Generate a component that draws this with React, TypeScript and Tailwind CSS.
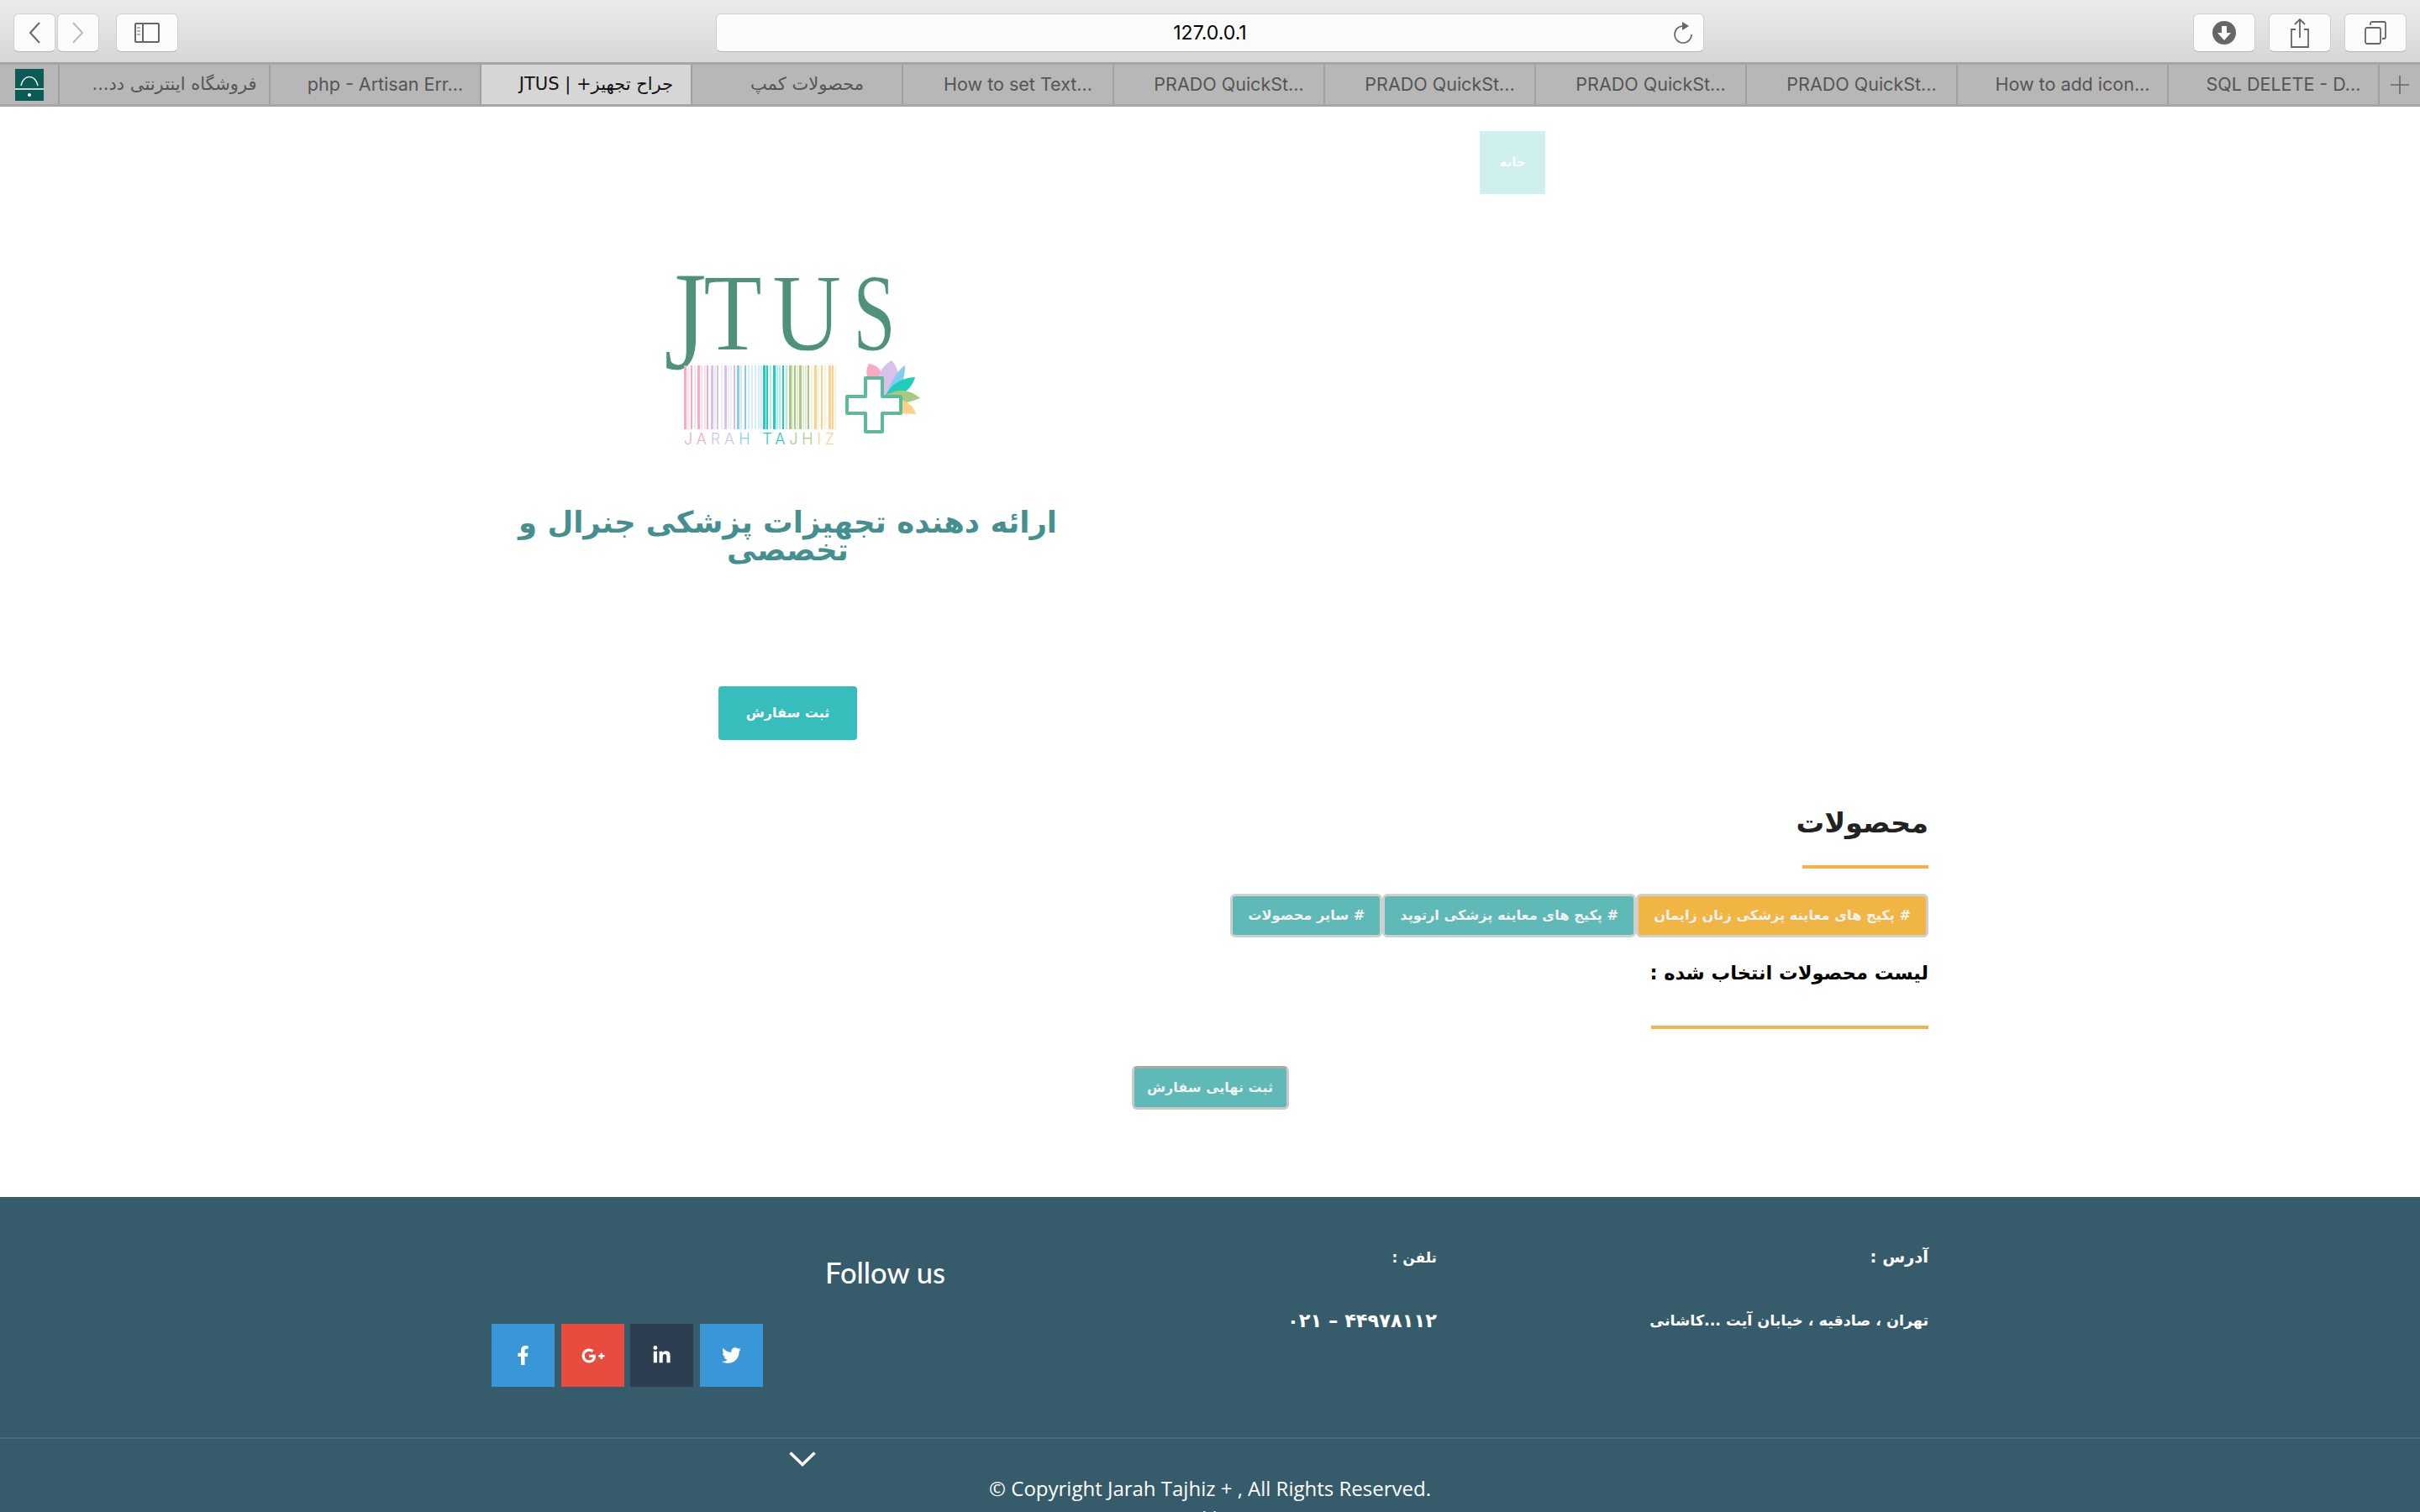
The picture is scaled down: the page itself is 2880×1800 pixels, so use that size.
import { FaFacebookF, FaGooglePlusG, FaLinkedinIn, FaTwitter } from "react-icons/fa";

const fa = "font-['DejaVu_Sans',sans-serif]";

const tabs = [
  { label: "فروشگاه اینترنتی دد...", rtl: true },
  { label: "php - Artisan Err..." },
  { label: "جراح تجهیز+ | JTUS", rtl: true, active: true },
  { label: "محصولات کمپ", rtl: true },
  { label: "How to set Text..." },
  { label: "PRADO QuickSt..." },
  { label: "PRADO QuickSt..." },
  { label: "PRADO QuickSt..." },
  { label: "PRADO QuickSt..." },
  { label: "How to add icon..." },
  { label: "SQL DELETE - D..." },
];

const barSets = [
  { color: "#f7aac0", x: [74, 82, 90, 101], pale: [78, 86, 94, 98] },
  { color: "#d8c2ea", x: [106, 113, 122, 133], pale: [110, 118, 126, 129] },
  { color: "#86ccf1", x: [137, 146], pale: [141, 150, 154, 158, 162, 165] },
  { color: "#1fcdbb", x: [168, 172, 180, 191], pale: [176, 184, 187, 195] },
  { color: "#a7ca80", x: [199, 205, 211, 221], pale: [202, 208, 215, 218] },
  { color: "#fdd18c", x: [229, 237, 246, 250], pale: [225, 233, 241, 253] },
];

function ToolButton({ className, children }: { className: string; children: React.ReactNode }) {
  return (
    <div className={`h-[46px] rounded-[6px] bg-[#fbfbfb] border border-[#cfcfcf] border-b-[#b5b5b5] flex items-center justify-center ${className}`}>
      {children}
    </div>
  );
}

function BrowserChrome() {
  return (
    <div>
      <div className="h-[74px] bg-gradient-to-b from-[#ececec] to-[#d6d6d6] flex items-start pt-4 pl-4 pr-4">
        <ToolButton className="w-[50px]">
          <svg width="16" height="26" viewBox="0 0 16 26" fill="none" stroke="#666" strokeWidth="2"><path d="M14 1 3 13l11 12" /></svg>
        </ToolButton>
        <ToolButton className="w-[50px] ml-[2px]">
          <svg width="16" height="26" viewBox="0 0 16 26" fill="none" stroke="#bbb" strokeWidth="2"><path d="m2 1 11 12L2 25" /></svg>
        </ToolButton>
        <ToolButton className="w-[74px] ml-[20px]">
          <svg width="30" height="24" viewBox="0 0 30 24" fill="none" stroke="#666" strokeWidth="2">
            <rect x="1" y="1" width="28" height="22" rx="1" />
            <path d="M10 1v22" />
            <path d="M3 6h4M3 10h4M3 14h4" strokeWidth="1.5" stroke="#999" />
          </svg>
        </ToolButton>
        <ToolButton className="w-[1176px] ml-[640px] relative">
          <span className="font-['Inter',sans-serif] text-[23px] text-black">127.0.0.1</span>
          <svg className="absolute right-[11px] top-[8px]" width="26" height="28" viewBox="0 0 26 28" fill="none" stroke="#666" strokeWidth="1.6">
            <path d="M13 6a10 10 0 1 0 10 10" />
            <path d="M12 1l8 5-8 5z" fill="#666" stroke="none" />
          </svg>
        </ToolButton>
        <ToolButton className="w-[74px] ml-[582px]">
          <svg width="28" height="28" viewBox="0 0 28 28">
            <circle cx="14" cy="14" r="14" fill="#666" />
            <path d="M11 6h6v8h5l-8 9-8-9h5z" fill="#fff" />
          </svg>
        </ToolButton>
        <ToolButton className="w-[74px] ml-4">
          <svg width="24" height="36" viewBox="0 0 24 36" fill="none" stroke="#666" strokeWidth="1.8">
            <path d="M7 14H2v21h20V14h-5" />
            <path d="M12 24V2M6 8l6-6 6 6" />
          </svg>
        </ToolButton>
        <ToolButton className="w-[74px] ml-4">
          <svg width="26" height="28" viewBox="0 0 26 28" fill="none" stroke="#666" strokeWidth="1.8">
            <rect x="1" y="8" width="18" height="19" rx="2" />
            <path d="M7 5V3a2 2 0 0 1 2-2h14a2 2 0 0 1 2 2v16a2 2 0 0 1-2 2h-2" />
          </svg>
        </ToolButton>
      </div>
      <div className="h-[53px] bg-[#b7b7b7] border-y-[3px] border-[#a6a6a6] flex font-['Inter',sans-serif] text-[21.5px] text-[#555]">
        <div className="w-[71px] shrink-0 flex items-center justify-center border-r-2 border-[#a0a0a0]">
          <svg width="34" height="38" viewBox="0 0 34 38">
            <rect width="34" height="38" fill="#0b5a54" />
            <path d="M7 20C10 6 24 6 27 20" fill="none" stroke="#fff" strokeWidth="1.5" />
            <path d="M0 24h34" stroke="#fff" strokeWidth="1.5" />
            <circle cx="17" cy="31" r="2" fill="#fff" />
          </svg>
        </div>
        {tabs.map((tab, i) => (
          <div
            key={i}
            dir={tab.rtl ? "rtl" : "ltr"}
            className={`w-[251px] shrink-0 flex items-center justify-center pl-[24px] whitespace-nowrap border-r-2 border-[#a0a0a0] ${tab.rtl ? fa + " text-[21px]" : ""} ${tab.active ? "bg-[#d6d6d6] text-[#111]" : ""}`}
          >
            {tab.label}
          </div>
        ))}
        <div className="flex-1 flex items-center justify-center">
          <svg width="22" height="22" viewBox="0 0 22 22" stroke="#666" strokeWidth="1.6"><path d="M11 0v22M0 11h22" /></svg>
        </div>
      </div>
    </div>
  );
}

function Logo() {
  return (
    <svg width="400" height="260" viewBox="0 0 400 260" className="block">
      <g fontFamily="'Liberation Serif', serif" fill="#4f917b" fontSize="131" stroke="#fff" strokeWidth="0.8">
        <text transform="translate(50 139) scale(1 1.3)">J</text>
        <text transform="translate(97 117) scale(0.875 1)">T</text>
        <text transform="translate(179 117) scale(0.87 1)">U</text>
        <text transform="translate(275 117) scale(0.7 1)">S</text>
      </g>
      {barSets.map((set) => (
        <g key={set.color}>
          {set.pale.map((x) => (
            <rect key={x} x={x} y="135" width="2" height="76" fill={set.color} opacity="0.35" />
          ))}
          {set.x.map((x, i) => (
            <rect key={x} x={x} y="135" width={i % 2 ? 2 : 3} height="76" fill={set.color} />
          ))}
        </g>
      ))}
      <text x="74" y="229" fontFamily="'Inter', sans-serif" fontSize="18" fontWeight="300" letterSpacing="4.9">
        <tspan fill="#f7aac0">JA</tspan>
        <tspan fill="#d8c2ea">RA</tspan>
        <tspan fill="#86ccf1">H </tspan>
        <tspan fill="#1fcdbb">TA</tspan>
        <tspan fill="#a7ca80">JH</tspan>
        <tspan fill="#fdd18c">IZ</tspan>
      </text>
      <g>
        <path d="M312 180C287 150 290 142 294 133C305 135 315 140 312 180Z" fill="#f7aac0" />
        <path d="M312 180C300 150 305 140 321 129C335 145 330 160 312 180Z" fill="#d8c2ea" />
        <path d="M312 180C320 150 330 140 337 135C337 155 330 170 312 180Z" fill="#86ccf1" />
        <path d="M312 175C320 155 335 150 349 149C345 165 330 172 312 180Z" fill="#1fcdbb" />
        <path d="M312 172C330 160 345 165 355 174C340 180 330 182 315 178Z" fill="#a7ca80" />
        <path d="M325 175C340 175 348 185 350 193L325 192Z" fill="#fdd18c" />
      </g>
      <path
        d="M290 150h20v22h22v20h-22v22h-20v-22h-22v-20h22z"
        fill="#fff"
        stroke="#5dbb9a"
        strokeWidth="4"
        strokeLinejoin="round"
      />
    </svg>
  );
}

function CategoryButton({ label, amber }: { label: string; amber?: boolean }) {
  return (
    <div className={`h-[52px] px-[18px] flex items-center rounded-[6px] border-[3px] border-[#cfcfcf] text-[#f2f2f2] text-[16.2px] font-bold whitespace-nowrap ${amber ? "bg-[#f0b542]" : "bg-[#5fb9b7]"}`}>
      {label}
    </div>
  );
}

function SocialSquare({ className, children }: { className: string; children: React.ReactNode }) {
  return <div className={`w-[75px] h-[75px] flex items-center justify-center text-white text-[23px] ${className}`}>{children}</div>;
}

export default function App() {
  return (
    <div className="h-screen overflow-hidden bg-white">
      <BrowserChrome />

      <div className="w-[1710px] mx-auto">
        <div className="pt-[29px] pl-[1176px]">
          <div className={`w-[78px] h-[75px] bg-[#cef0ef] flex items-center justify-center text-white text-[15px] font-bold ${fa}`}>خانه</div>
        </div>

        <div className="w-[705px] flex flex-col items-center">
          <div className="mt-[69px] ml-[5px]">
            <Logo />
          </div>
          <h1 dir="rtl" className={`mt-[45px] w-[680px] text-center text-[35.5px] leading-[33px] font-bold text-[#45908f] ${fa}`}>
            ارائه دهنده تجهیزات پزشکی جنرال و تخصصی
          </h1>
          <div className={`mt-[146px] w-[165px] h-[64px] rounded-[4px] bg-[#37bdbc] text-white text-[16px] font-bold flex items-center justify-center ${fa}`}>
            ثبت سفارش
          </div>
        </div>

        <div dir="rtl" className={fa}>
          <h2 className="mt-[74px] h-[50px] leading-[50px] text-[33.5px] font-bold text-[#222]">محصولات</h2>
          <div className="mt-[25px] w-[150px] h-1 bg-[#f9b248]" />
          <div className="mt-[30px] flex">
            <CategoryButton amber label="# پکیج های معاینه پزشکی زنان زایمان" />
            <CategoryButton label="# پکیج های معاینه پزشکی ارتوپد" />
            <CategoryButton label="# سایر محصولات" />
          </div>
          <h3 className="mt-[22px] h-10 leading-10 text-[22.5px] font-bold text-black">لیست محصولات انتخاب شده :</h3>
          <div className="mt-[43px] w-[330px] h-1 bg-[#f9b248]" />
          <div className="mt-[44px] flex justify-center">
            <div className="h-[52px] w-[187px] flex items-center justify-center rounded-[6px] border-[3px] border-[#c9c9c9] border-t-[#a9a9a9] bg-[#5fb9b7] text-[#f2f2f2] text-[16px] font-bold whitespace-nowrap">
              ثبت نهایی سفارش
            </div>
          </div>
        </div>
      </div>

      <footer className="mt-[104px] bg-[#365c6b] text-white h-[400px]">
        <div dir="rtl" className={`w-[1710px] h-[286px] mx-auto pt-[57px] flex ${fa}`}>
          <div className="w-[585px] font-bold">
            <div className="h-[30px] leading-[30px] text-[19.5px]">آدرس :</div>
            <div className="mt-[45px] h-[30px] leading-[30px] text-[17.5px]">تهران ، صادقیه ، خیابان آیت ...کاشانی</div>
          </div>
          <div className="w-[585px] font-bold">
            <div className="h-[30px] leading-[30px] text-[17px]">تلفن :</div>
            <div dir="ltr" className="mt-[45px] h-[30px] leading-[30px] text-right text-[22.5px]">۰۲۱ – ۴۴۹۷۸۱۱۲</div>
          </div>
          <div className="flex-1">
            <div className="mt-[13px] h-10 leading-10 text-[34.5px] font-['Lato',sans-serif] font-medium">Follow us</div>
            <div dir="ltr" className="mt-[41px] flex text-left">
              <SocialSquare className="bg-[#3a97d7]"><FaFacebookF /></SocialSquare>
              <SocialSquare className="bg-[#e74c3f] ml-2"><FaGooglePlusG className="text-[28px]" /></SocialSquare>
              <SocialSquare className="bg-[#2c3e50] ml-[7px]"><FaLinkedinIn /></SocialSquare>
              <SocialSquare className="bg-[#3a97d7] ml-2"><FaTwitter /></SocialSquare>
            </div>
          </div>
        </div>
        <div className="h-[2px] bg-[#436d78]" />
        <div className="pl-[939px] pt-[15px]">
          <svg width="32" height="18" viewBox="0 0 32 18" fill="none" stroke="#fff" strokeWidth="3.5" className="block">
            <path d="M1.5 1.5 16 15.5 30.5 1.5" />
          </svg>
        </div>
        <div className="mt-2 text-center font-['Open_Sans',sans-serif] text-[24px] leading-[36px]">
          <div>© Copyright Jarah Tajhiz + , All Rights Reserved.</div>
          <div>Designed by <span className="text-[#1bb1b1]">JTUS.ir</span></div>
        </div>
      </footer>
    </div>
  );
}
